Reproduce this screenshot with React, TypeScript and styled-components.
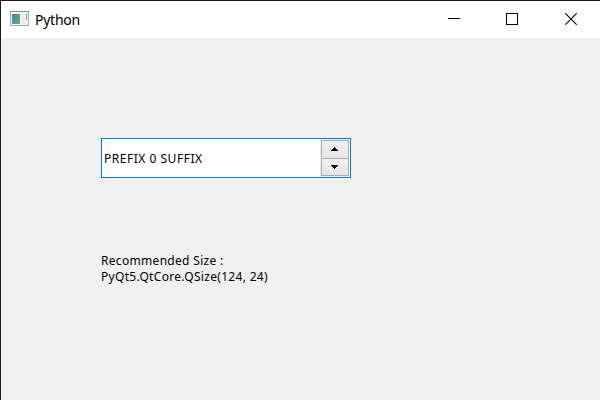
import React from "react";
import styled, { createGlobalStyle } from "styled-components";

const GlobalStyle = createGlobalStyle`
  * { box-sizing: border-box; }
  body { margin: 0; overflow: hidden; }
`;

const Window = styled.main`
  width: 600px;
  height: 400px;
  display: flex;
  flex-direction: column;
  border: solid #1a1819;
  border-width: 1px 0 0 1px;
  background: #f0f0f0;
  color: #000;
  font-family: "Noto Sans", sans-serif;
`;

const TitleBar = styled.header`
  height: 37px;
  display: flex;
  align-items: center;
  background: #fff;
  padding-left: 9px;
`;

const Title = styled.h1`
  margin: 0 auto 0 6px;
  font-size: 14px;
  font-weight: 400;
  line-height: 20px;
  letter-spacing: -0.25px;
`;

const WindowButton = styled.button<{ $last?: boolean }>`
  width: ${(p) => (p.$last ? 59 : 58)}px;
  height: 37px;
  padding: 0 0 1px ${(p) => (p.$last ? 1 : 0)}px;
  border: 0;
  background: none;
  display: flex;
  align-items: center;
  justify-content: center;
`;

const Icon = styled.svg`
  display: block;
  flex: none;
`;

const Logo = styled(Icon)`
  margin-bottom: 1px;
`;

const Content = styled.section`
  display: flex;
  flex-direction: column;
  align-items: flex-start;
  gap: 75px;
  padding: 100px 0 0 100px;
`;

const SpinBox = styled.div`
  width: 250px;
  height: 40px;
  display: flex;
  padding: 1px;
  border: 1px solid #0078d7;
  background: #fff;
`;

const Value = styled.div`
  flex: 1;
  padding-left: 1px;
  font-size: 12px;
  line-height: 37px;
  letter-spacing: 0.52px;
  white-space: pre;
`;

const Steppers = styled.div`
  width: 29px;
  height: 38px;
  margin-top: -1px;
  padding: 1px 0 1px 1px;
  display: flex;
  flex-direction: column;
  background: #f0f0f0;
`;

const Step = styled.button`
  width: 28px;
  height: 19px;
  padding: 0 1px 1px 0;
  border: 1px solid #acacac;
  background: linear-gradient(#f0f0f0, #e5e5e5);
  display: flex;
  align-items: center;
  justify-content: center;

  & + & {
    height: 18px;
    margin-top: -1px;
    padding-bottom: 0;
  }
`;

const SizeHint = styled.p`
  margin: 0;
  font-size: 12px;
  line-height: 16px;
  letter-spacing: 0.31px;
`;

const HintLine = styled.span`
  display: block;
  white-space: pre;
`;

function AppIcon() {
  return (
    <Logo width="19" height="16" viewBox="0 0 19 16">
      <defs>
        <linearGradient id="screen" x1="0" y1="0" x2="1" y2="1">
          <stop offset="0" stopColor="#477faa" />
          <stop offset="1" stopColor="#65b477" />
        </linearGradient>
        <linearGradient id="gauge" x1="0" y1="0" x2="0" y2="1">
          <stop offset="0" stopColor="#4a8ba0" />
          <stop offset="1" stopColor="#72c58a" />
        </linearGradient>
      </defs>
      <rect x=".5" y=".5" width="18" height="14" fill="#f6f7f8" stroke="#a1a7ab" />
      <path d="M0 .5H19" stroke="#858c90" />
      <rect x="2" y="3" width="8" height="10" fill="url(#screen)" />
      <path d="M11 3h4v10h-4z" fill="#e9ebee" />
      <rect x="16" y="3" width="1" height="6" fill="url(#gauge)" />
    </Logo>
  );
}

export default function App() {
  return (
    <>
      <GlobalStyle />
      <Window>
        <TitleBar>
          <AppIcon />
          <Title>Python</Title>
          <WindowButton aria-label="Minimize">
            <Icon width="12" height="12" viewBox="0 0 12 12" shapeRendering="crispEdges">
              <path d="M0 5.5H12" stroke="#000" />
            </Icon>
          </WindowButton>
          <WindowButton aria-label="Maximize">
            <Icon width="12" height="12" viewBox="0 0 12 12" shapeRendering="crispEdges">
              <rect x=".5" y=".5" width="11" height="11" fill="none" stroke="#000" />
            </Icon>
          </WindowButton>
          <WindowButton $last aria-label="Close">
            <Icon width="12" height="12" viewBox="0 0 12 12">
              <path d="M.3.3 11.7 11.7M11.7.3.3 11.7" fill="none" stroke="#000" strokeWidth="1.1" />
            </Icon>
          </WindowButton>
        </TitleBar>
        <Content>
          <SpinBox>
            <Value>PREFIX 0 SUFFIX</Value>
            <Steppers>
              <Step aria-label="Increase">
                <Icon width="7" height="4" viewBox="0 0 7 4" shapeRendering="crispEdges">
                  <path d="M3 0h1v1h1v1h1v1h1v1H0V3h1V2h1V1h1z" />
                </Icon>
              </Step>
              <Step aria-label="Decrease">
                <Icon width="7" height="4" viewBox="0 0 7 4" shapeRendering="crispEdges">
                  <path d="M0 0h7v1H6v1H5v1H4v1H3V3H2V2H1V1H0z" />
                </Icon>
              </Step>
            </Steppers>
          </SpinBox>
          <SizeHint>
            <HintLine>Recommended Size :</HintLine>
            <HintLine>PyQt5.QtCore.QSize(124, 24)</HintLine>
          </SizeHint>
        </Content>
      </Window>
    </>
  );
}
